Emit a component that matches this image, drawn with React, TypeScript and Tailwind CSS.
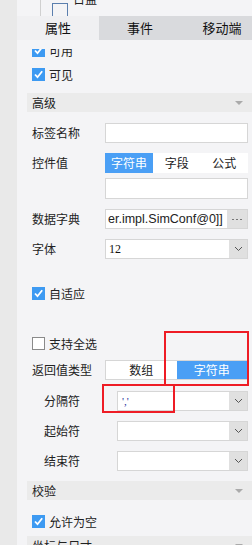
import React from "react";

const font = { fontFamily: '"Noto Sans CJK SC", "Liberation Sans", sans-serif' };

function Check({ checked = true }: { checked?: boolean }) {
  if (!checked) {
    return <div className="w-[13px] h-[13px] bg-white border border-[#8a8a8a] shrink-0" />;
  }
  return (
    <div className="w-[13px] h-[13px] bg-[#3d9af2] shrink-0 flex items-center justify-center">
      <svg width="11" height="11" viewBox="0 0 11 11">
        <path d="M2 5.5 L4.5 8.2 L9.2 2.2" fill="none" stroke="white" strokeWidth="1.8" />
      </svg>
    </div>
  );
}

function CheckRow({ label, checked = true, className = "" }: { label: string; checked?: boolean; className?: string }) {
  return (
    <div className={`h-[13px] flex items-center gap-[4px] pl-[15px] shrink-0 ${className}`}>
      <Check checked={checked} />
      <span className="text-[12px] text-[#222] leading-none">{label}</span>
    </div>
  );
}

function Section({ title, className = "" }: { title: string; className?: string }) {
  return (
    <div className={`h-[19px] ml-[10px] bg-[#ebebeb] flex items-center justify-between pl-[5px] pr-[9px] shrink-0 ${className}`}>
      <span className="text-[12px] text-[#222] leading-none">{title}</span>
      <div className="w-0 h-0 border-l-[4px] border-r-[4px] border-t-[4px] border-l-transparent border-r-transparent border-t-[#aaaaaa]" />
    </div>
  );
}

function Chevron() {
  return (
    <div className="w-[18px] h-full bg-[#e0e0e0] flex items-center justify-center shrink-0">
      <svg width="9" height="6" viewBox="0 0 9 6">
        <path d="M1 1 L4.5 4.5 L8 1" fill="none" stroke="#555" strokeWidth="1" />
      </svg>
    </div>
  );
}

function Row({ label, sub = false, className = "", children }: { label: string; sub?: boolean; className?: string; children: React.ReactNode }) {
  return (
    <div className={`h-[20px] flex items-center pr-[4px] shrink-0 ${className}`}>
      <div className={`${sub ? "w-[100px] pl-[27px]" : "w-[88px] pl-[15px]"} text-[12px] text-[#222] leading-none shrink-0`}>{label}</div>
      <div className="flex-1 h-full flex">{children}</div>
    </div>
  );
}

function Select({ value, valueClass = "" }: { value?: string; valueClass?: string }) {
  return (
    <div className="flex-1 h-full flex border border-[#d6d6d6] bg-white">
      <div className={`flex-1 flex items-center pl-[3px] ${valueClass}`}>{value}</div>
      <Chevron />
    </div>
  );
}

export default function App() {
  return (
    <div className="relative w-[252px] h-[545px] overflow-hidden flex bg-[#f4f4f6]" style={font}>
      <div className="w-[17px] h-full bg-[#e9e9e9] shrink-0" />
      <div className="flex-1 flex flex-col min-w-0">
        <div className="relative h-[16px] overflow-hidden shrink-0">
          <div className="absolute left-[23px] top-0 w-px h-full bg-[#d0d0d0]" />
          <div className="absolute left-[35px] top-[3px] w-[16px] h-[16px] border border-[#5b7fae]" />
          <span className="absolute left-[56px] top-[-8px] text-[12px] leading-[13px] text-[#222]">日监</span>
        </div>
        <div className="h-[24px] flex shrink-0 text-[13px] text-[#111]">
          <div className="w-[82px] bg-[#f0f0f2] flex items-center justify-center shrink-0">属性</div>
          <div className="w-[82px] bg-[#d9dadd] flex items-center justify-center shrink-0">事件</div>
          <div className="w-[82px] bg-[#d9dadd] flex items-center justify-center shrink-0">移动端</div>
        </div>
        <div className="mt-[9px] flex-1 overflow-hidden flex flex-col">
          <CheckRow label="可用" className="-mt-[5px]" />
          <CheckRow label="可见" className="mt-[11px]" />
          <Section title="高级" className="mt-[12px]" />
          <Row label="标签名称" className="mt-[11px]">
            <div className="flex-1 bg-white border border-[#d6d6d6]" />
          </Row>
          <Row label="控件值" className="mt-[10px]">
            <div className="flex-1 flex bg-white text-[12px]">
              <div className="w-[48px] bg-[#4a9ff5] text-white flex items-center justify-center">字符串</div>
              <div className="flex-1 flex items-center justify-center text-[#222]">字段</div>
              <div className="flex-1 flex items-center justify-center text-[#222]">公式</div>
            </div>
          </Row>
          <div className="h-[21px] mt-[5px] ml-[88px] mr-[4px] bg-white border border-[#d6d6d6] shrink-0" />
          <Row label="数据字典" className="mt-[10px]">
            <div className="flex-1 flex border border-[#d6d6d6] bg-white overflow-hidden">
              <div className="flex-1 flex items-center pl-[2px] text-[12.5px] text-[#222] whitespace-nowrap overflow-hidden" style={{ fontFamily: '"Liberation Sans", Arial, sans-serif' }}>
                er.impl.SimConf@0]]
              </div>
              <div className="w-[20px] bg-[#e0e0e0] flex items-center justify-center gap-[2px] shrink-0">
                <span className="w-[2px] h-[1px] bg-[#777]" />
                <span className="w-[2px] h-[1px] bg-[#777]" />
                <span className="w-[2px] h-[1px] bg-[#777]" />
              </div>
            </div>
          </Row>
          <Row label="字体" className="mt-[10px]">
            <Select value="12" valueClass="text-[12px] text-[#111] [font-family:'Liberation_Serif',serif]" />
          </Row>
          <CheckRow label="自适应" className="mt-[28px]" />
          <CheckRow label="支持全选" checked={false} className="mt-[37px]" />
          <Row label="返回值类型" className="mt-[10px]">
            <div className="flex-1 flex bg-white border border-[#d6d6d6] text-[12px]">
              <div className="flex-1 flex items-center justify-center text-[#222]">数组</div>
              <div className="flex-1 bg-[#4a9ff5] text-white flex items-center justify-center">字符串</div>
            </div>
          </Row>
          <Row label="分隔符" sub className="mt-[11px]">
            <Select value="','" valueClass="text-[11px] text-[#1b2a9a] [font-family:'Liberation_Serif',serif] pl-[4px]" />
          </Row>
          <Row label="起始符" sub className="mt-[10px]">
            <Select />
          </Row>
          <Row label="结束符" sub className="mt-[10px]">
            <Select />
          </Row>
          <Section title="校验" className="mt-[10px]" />
          <CheckRow label="允许为空" className="mt-[15px]" />
          <Section title="坐标与尺寸" className="mt-[8px]" />
        </div>
      </div>
      <div className="absolute left-[164px] top-[331px] w-[85px] h-[55px] border-2 border-[#ee1c25]" />
      <div className="absolute left-[102px] top-[384px] w-[73px] h-[29px] border-2 border-[#ee1c25]" />
    </div>
  );
}
